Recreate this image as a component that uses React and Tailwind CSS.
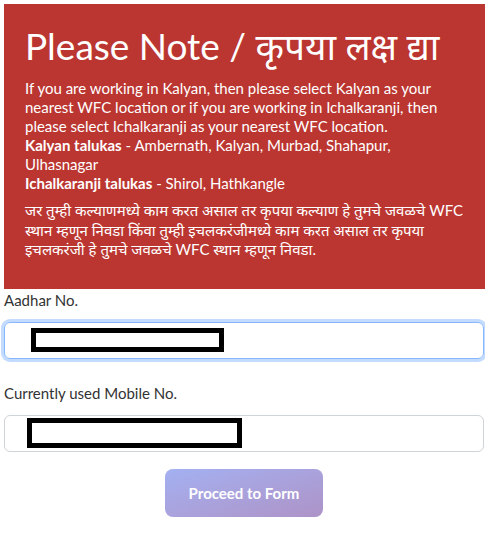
import React from "react";

const font = { fontFamily: '"Lato", "Noto Sans Devanagari", "Noto Sans", sans-serif' };

export default function App() {
  return (
    <div className="bg-white min-h-[537px] w-[485px] overflow-hidden pt-1 pl-1 text-[#212529]" style={font}>
      <div className="bg-[#bb3631] text-white pl-[21px] pr-2 pt-[20px] pb-[29px]">
        <h1 className="text-[37px] leading-[43px] font-normal whitespace-nowrap">Please Note / कृपया लक्ष द्या</h1>
        <p className="mt-[12px] text-[15px] leading-[18.9px]">
          If you are working in Kalyan, then please select Kalyan as your
          <br />
          nearest WFC location or if you are working in Ichalkaranji, then
          <br />
          please select Ichalkaranji as your nearest WFC location.
          <br />
          <b>Kalyan talukas</b> - Ambernath, Kalyan, Murbad, Shahapur,
          <br />
          Ulhasnagar
          <br />
          <b>Ichalkaranji talukas</b> - Shirol, Hathkangle
        </p>
        <p className="mt-[9px] text-[15px] leading-[19.5px]">
          जर तुम्ही कल्याणमध्ये काम करत असाल तर कृपया कल्याण हे तुमचे जवळचे WFC
          <br />
          स्थान म्हणून निवडा किंवा तुम्ही इचलकरंजीमध्ये काम करत असाल तर कृपया
          <br />
          इचलकरंजी हे तुमचे जवळचे WFC स्थान म्हणून निवडा.
        </p>
      </div>

      <div className="w-[480px]">
        <label className="block text-[15px] leading-[22px] text-[#333]">Aadhar No.</label>
        <div className="mt-[11px] h-[37px] rounded-[6px] border border-[#86b7fe] shadow-[0_0_0_3px_rgba(13,110,253,0.25)] flex items-center pl-[26px]">
          <div className="w-[193px] h-[24px] border-[5px] border-black bg-white" />
        </div>

        <label className="mt-[23px] block text-[15px] leading-[22px] text-[#333]">Currently used Mobile No.</label>
        <div className="mt-[11px] h-[37px] rounded-[6px] border border-[#ced4da] flex items-center pl-[22px]">
          <div className="w-[215px] h-[30px] border-[5px] border-black bg-white" />
        </div>

        <div className="flex justify-center mt-[17px]">
          <button className="w-[158px] h-[48px] rounded-[8px] bg-gradient-to-br from-[#667eea] to-[#764ba2] opacity-60 text-white font-bold text-[15px]">
            Proceed to Form
          </button>
        </div>
      </div>
    </div>
  );
}
